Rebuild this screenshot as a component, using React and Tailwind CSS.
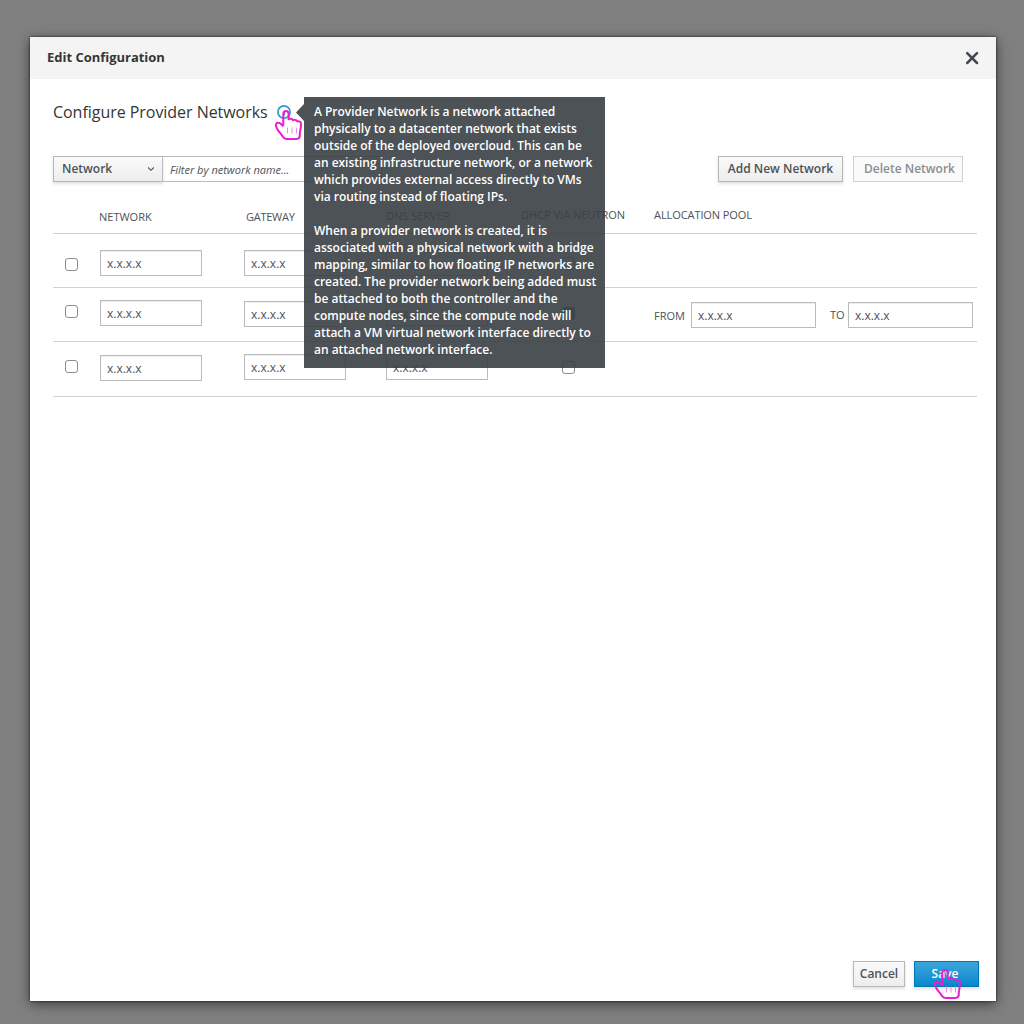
import React from "react";

function Field({ className }) {
  return (
    <div
      className={`h-[26px] shrink-0 border border-[#bbbbbb] bg-white pl-1.5 text-[12px] leading-[26px] text-[#4d5258] shadow-[inset_0_1px_1px_rgba(3,3,3,0.075)] ${className}`}
    >
      x.x.x.x
    </div>
  );
}

function Check({ checked, className }) {
  return (
    <div
      className={`size-[13px] rounded-[3px] border ${checked ? "border-[#0a76bd] bg-[#1c8fd6]" : "border-[#8b8d8f] bg-white"} ${className}`}
    />
  );
}

function Hand() {
  return (
    <svg width="30" height="32" viewBox="0 0 30 32" fill="none" className="block">
      <path
        d="M9.3 16.5 V5 C9.3 3.2 10.3 2 11.9 2 C13.5 2 14.6 3.2 14.6 5 V10.3 C15.6 9.3 18.4 9.5 19.1 11.3 C20.2 10.5 22.6 10.8 23.3 12.4 C25 11.9 27 12.6 27 15 C27 19.5 26.3 20.5 25.8 24 V26.5 C25.8 28.6 24.4 29.9 22.7 29.9 H12.4 C10.6 29.9 9.9 29.2 9 27.9 C6.8 24.5 5 23.2 3.4 20.2 C2.4 18.3 1.2 16.7 2 15 C2.8 13.4 4.8 13.3 6.2 14.3 L9.3 17.4"
        stroke="#e81fce"
        strokeWidth="2"
        strokeLinejoin="round"
      />
      <path d="M13.5 18.5 V24.5 M18 18.5 V24.5 M22.5 18.5 V24.5" stroke="#f08be2" strokeWidth="1" />
    </svg>
  );
}

const rows = [
  {
    height: "h-[54px]",
    check: "mt-[24px]",
    network: "mt-4",
    gateway: "mt-4",
    dns: "mt-4",
    dhcp: "mt-[23px]",
  },
  {
    height: "h-[54px]",
    check: "mt-[17px]",
    network: "mt-[12px]",
    gateway: "mt-[13px]",
    dns: "mt-[12px]",
    dhcp: "mt-[19px]",
    checked: true,
    pool: true,
  },
  {
    height: "h-[55px]",
    check: "mt-[18px]",
    network: "mt-[13px]",
    gateway: "mt-[12px]",
    dns: "mt-[12px]",
    dhcp: "mt-[19px]",
  },
];

const cols = "grid grid-cols-[47px_144px_142px_135px_133px_1fr] items-start";

const first = [
  "A Provider Network is a network attached",
  "physically to a datacenter network that exists",
  "outside of the deployed overcloud. This can be",
  "an existing infrastructure network, or a network",
  "which provides external access directly to VMs",
  "via routing instead of floating IPs.",
];
const second = [
  "When a provider network is created, it is",
  "associated with a physical network with a bridge",
  "mapping, similar to how floating IP networks are",
  "created. The provider network being added must",
  "be attached to both the controller and the",
  "compute nodes, since the compute node will",
  "attach a VM virtual network interface directly to",
  "an attached network interface.",
];

const button =
  "h-[26px] border border-[#b7b7b7] bg-linear-to-b from-[#fafafa] to-[#ededed] text-[12px] leading-[24px] font-semibold text-[#4d5258] text-center whitespace-nowrap shadow-[0_2px_3px_rgba(3,3,3,0.12)]";

export default function App() {
  return (
    <div className="h-[1024px] w-[1024px] overflow-hidden bg-[#808080] pt-[37px] pl-[30px] font-['Open_Sans','Noto_Sans',sans-serif]">
      <div className="flex h-[964px] w-[966px] flex-col bg-white shadow-[0_0_2px_rgba(0,0,0,0.8),0_3px_12px_rgba(0,0,0,0.55)]">
        <header className="flex h-[42px] shrink-0 items-start justify-between bg-[#f4f4f4] pr-[17px] pl-[17px]">
          <h1 className="mt-[11px] text-[13px] leading-[18px] font-bold tracking-[-0.02px] text-[#363636]">
            Edit Configuration
          </h1>
          <svg width="14" height="14" viewBox="0 0 14 14" className="mt-[14px]" fill="none">
            <path d="M2.2 2.2 L12 12 M12 2.2 L2.2 12" stroke="#41484f" strokeWidth="2.5" strokeLinecap="round" />
          </svg>
        </header>

        <main className="flex-1 pr-[19px] pl-[23px]">
          <div className="relative flex h-[77px] items-start">
            <h2 className="mt-[21px] w-[224px] text-[16px] leading-6 tracking-[-0.04px] whitespace-nowrap text-[#363636]">
              Configure Provider Networks
            </h2>
            <div className="relative mt-[26px]">
              <svg width="14" height="14" viewBox="0 0 14 14" fill="none">
                <circle cx="7" cy="7" r="6.1" stroke="#2a9bd8" strokeWidth="1.7" />
                <path d="M7 6 V10.5" stroke="#2a9bd8" strokeWidth="2" />
              </svg>
              <div className="absolute top-1 -left-[3px] z-20">
                <Hand />
              </div>
            </div>
            <div className="absolute top-[18px] left-[243px] z-10 flex items-start">
              <svg width="8" height="18" viewBox="0 0 8 18" className="mt-[7px]">
                <path d="M0 8.5 L8 0 V17 Z" fill="#3a3f44" fillOpacity="0.9" />
              </svg>
              <div className="h-[271px] w-[301px] bg-[#3a3f44]/90 pt-[6px] pl-[10px] text-[12px] leading-[17px] font-semibold tracking-[-0.02px] whitespace-nowrap text-white">
                {first.map((t) => (
                  <p key={t}>{t}</p>
                ))}
                <div className="h-[17px]" />
                {second.map((t) => (
                  <p key={t}>{t}</p>
                ))}
              </div>
            </div>
          </div>

          <div className="flex h-[50px] items-start pr-[14px]">
            <div className={`${button} flex w-[110px] items-center justify-between pr-[7px] pl-2`}>
              <span>Network</span>
              <svg width="8" height="6" viewBox="0 0 8 6" fill="none">
                <path d="M1.2 1.5 L4 4.3 L6.8 1.5" stroke="#4d5258" strokeWidth="1.1" />
              </svg>
            </div>
            <div className="-ml-px h-[26px] w-[220px] border border-[#bbbbbb] pl-[7px] text-[11px] leading-[26px] text-[#4d5258] italic">
              Filter by network name...
            </div>
            <div className={`${button} ml-auto w-[125px]`}>Add New Network</div>
            <div className="ml-[10px] h-[26px] w-[110px] border border-[#d1d1d1] bg-[#fafafa] pl-[3px] text-center text-[12px] leading-[24px] font-semibold whitespace-nowrap text-[#8b8d8f]">
              Delete Network
            </div>
          </div>

          <div className={`${cols} h-7 border-b border-[#d1d1d1] text-[11px] leading-4 whitespace-nowrap text-[#4d5258]`}>
            <span />
            <span className="mt-[3px] -ml-px">NETWORK</span>
            <span className="mt-[3px] ml-[2px] tracking-[-0.25px]">GATEWAY</span>
            <span className="mt-[2px]">DNS SERVER</span>
            <span className="mt-px">DHCP VIA NEUTRON</span>
            <span className="mt-px tracking-[-0.08px]">ALLOCATION POOL</span>
          </div>

          {rows.map((r, i) => (
            <div key={i} className={`${cols} ${r.height} border-b border-[#d1d1d1]`}>
              <Check className={`${r.check} ml-3`} />
              <Field className={`${r.network} w-[102px]`} />
              <Field className={`${r.gateway} w-[102px]`} />
              <Field className={`${r.dns} w-[102px]`} />
              <Check className={`${r.dhcp} ml-[41px]`} checked={r.checked} />
              {r.pool && (
                <div className="mt-[14px] flex text-[11px] leading-[26px] text-[#4d5258]">
                  <span className="mt-px w-[37px]">FROM</span>
                  <Field className="w-[125px]" />
                  <span className="ml-[14px] w-[18px]">TO</span>
                  <Field className="w-[125px]" />
                </div>
              )}
            </div>
          ))}
        </main>

        <footer className="flex h-[40px] shrink-0 items-start justify-end gap-[9px] pr-[17px]">
          <div className={`${button} w-[52px]`}>Cancel</div>
          <div className="relative h-[26px] w-[65px] border border-[#0076b7] bg-linear-to-b from-[#39a5dc] to-[#0088ce] pr-[3px] text-center text-[12px] leading-[24px] font-semibold text-white shadow-[0_2px_3px_rgba(3,3,3,0.12)]">
            Save
            <div className="absolute top-[6px] left-[18px]">
              <Hand />
            </div>
          </div>
        </footer>
      </div>
    </div>
  );
}
